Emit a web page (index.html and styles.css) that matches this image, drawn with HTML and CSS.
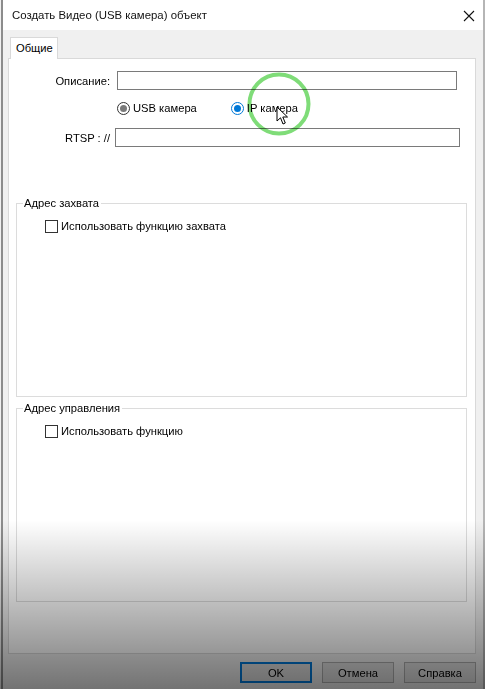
FILE: index.html
```html
<!DOCTYPE html>
<html lang="ru">
<head>
    <meta charset="UTF-8">
    <title>Создать Видео (USB камера) объект</title>
    <link rel="stylesheet" href="styles.css">
</head>
<body>
    <div class="window">
        <div class="titlebar">
            <span class="title">Создать Видео (USB камера) объект</span>
            <svg class="close" width="12" height="12" viewBox="0 0 12 12">
                <path d="M1 1 L11 11 M11 1 L1 11" stroke="#111" stroke-width="1.1" fill="none"/>
            </svg>
        </div>

        <div class="dialog">
            <div class="tabs">
                <div class="tab">Общие</div>
            </div>

            <div class="panel">
                <div class="row row-desc">
                    <label class="label">Описание:</label>
                    <div class="input input-desc"></div>
                </div>

                <div class="radios">
                    <span class="radio radio-off"><span class="dot"></span></span>
                    <span class="radio-text">USB камера</span>
                    <span class="radio radio-on"><span class="dot"></span></span>
                    <span class="radio-text">IP камера</span>
                </div>

                <div class="row row-rtsp">
                    <label class="label">RTSP : //</label>
                    <div class="input input-rtsp"></div>
                </div>

                <fieldset class="group group-first">
                    <legend>Адрес захвата</legend>
                    <div class="check-row">
                        <span class="check"></span>
                        <span>Использовать функцию захвата</span>
                    </div>
                </fieldset>

                <fieldset class="group">
                    <legend>Адрес управления</legend>
                    <div class="check-row">
                        <span class="check"></span>
                        <span>Использовать функцию</span>
                    </div>
                </fieldset>
            </div>

            <div class="buttons">
                <button class="btn btn-default">OK</button>
                <button class="btn">Отмена</button>
                <button class="btn">Справка</button>
            </div>
        </div>
    </div>

    <!-- подсветка курсора из видео -->
    <svg class="highlight" width="80" height="80" viewBox="0 0 80 80">
        <circle cx="40" cy="40" r="29.5" stroke="#7fdc78" stroke-width="4" fill="none"/>
    </svg>
    <svg class="cursor" width="14" height="20" viewBox="0 0 14 20">
        <path d="M1 1 L1 15 L4.5 11.8 L7 18 L9.3 17 L6.8 11 L11.5 11 Z" fill="#fff" stroke="#000" stroke-width="1" stroke-linejoin="round"/>
    </svg>

    <div class="shade"></div>
</body>
</html>
```

FILE: styles.css
```css
/* Диалог в стиле Windows */
* {
    margin: 0;
    padding: 0;
    box-sizing: border-box;
}
body {
    width: 485px;
    height: 689px;
    overflow: hidden;
    background: #f0f0f0;
    font-family: 'Liberation Sans', Arial, sans-serif;
    font-size: 11.2px;
    color: #000;
    position: relative;
}
.window {
    height: 689px;
    margin-left: 1px;
    border-left: 2px solid #8c8c8c;
    border-right: 2px solid #b5b5b5;
    width: 484px;
    background: #f0f0f0;
}
.titlebar {
    height: 30px;
    background: #fff;
    display: flex;
    align-items: center;
    justify-content: space-between;
    padding: 0 8px 0 9px;
}
.title {
    font-size: 11.4px;
    color: #111;
}
.close {
    margin-top: 1px;
}
.dialog {
    padding: 7px 5px 0 5px;
}
.tabs {
    display: flex;
    padding-left: 2px;
    height: 21px;
}
.tab {
    width: 48px;
    height: 22px;
    background: #fff;
    border: 1px solid #d9d9d9;
    border-bottom: none;
    padding: 4px 0 0 5px;
    position: relative;
    z-index: 1;
}
.panel {
    width: 468px;
    height: 596px;
    background: #fff;
    border: 1px solid #d9d9d9;
    padding: 0 8px 0 7px;
}
.row {
    display: flex;
    align-items: center;
}
.label {
    width: 101px;
    text-align: right;
    margin-left: -7px;
}
.row-desc {
    margin-top: 12px;
}
.input {
    background: #fff;
    border: 1px solid #7a7a7a;
}
.input-desc {
    width: 340px;
    height: 19px;
    margin-left: 7px;
}
.radios {
    display: flex;
    align-items: center;
    height: 14px;
    margin-top: 11px;
    padding-left: 101px;
}
.radio {
    width: 13px;
    height: 13px;
    border-radius: 50%;
    border: 1px solid #333;
    background: #fff;
    display: flex;
    align-items: center;
    justify-content: center;
    flex-shrink: 0;
}
.radio .dot {
    display: block;
    width: 7px;
    height: 7px;
    border-radius: 50%;
}
.radio-off {
    border-color: #333;
}
.radio-off .dot {
    background: #7a7a7a;
}
.radio-on {
    border-color: #0078d7;
    margin-left: 34px;
}
.radio-on .dot {
    background: #0078d7;
}
.radio-text {
    margin-left: 3px;
}
.row-rtsp {
    margin-top: 13px;
}
.input-rtsp {
    width: 345px;
    height: 19px;
    margin-left: 5px;
}
.group {
    border: 1px solid #dcdcdc;
    height: 201px;
    padding: 9px 0 0 28px;
    margin-top: 4px;
}
.group-first {
    margin-top: 49px;
}
.group legend {
    margin-left: -22px;
    padding: 0 2px 0 1px;
    line-height: 14px;
}
.check-row {
    display: flex;
    align-items: center;
    height: 14px;
}
.check {
    width: 13px;
    height: 13px;
    border: 1px solid #333;
    background: #fff;
    margin-right: 3px;
}
.buttons {
    display: flex;
    justify-content: flex-end;
    gap: 10px;
    margin-top: 8px;
    padding-right: 2px;
}
.btn {
    width: 72px;
    height: 21px;
    background: #e1e1e1;
    border: 1px solid #adadad;
    font-family: inherit;
    font-size: 11.2px;
    color: #000;
}
.btn-default {
    border: 2px solid #0078d7;
}
.highlight {
    position: absolute;
    left: 239px;
    top: 64px;
    mix-blend-mode: multiply;
}
.cursor {
    position: absolute;
    left: 276px;
    top: 106px;
}
/* затемнение снизу (кадр из видео) */
.shade {
    position: absolute;
    left: 0;
    right: 0;
    bottom: 0;
    height: 169px;
    background: linear-gradient(to bottom, rgba(0, 0, 0, 0), rgba(0, 0, 0, 0.52));
    pointer-events: none;
}
```
